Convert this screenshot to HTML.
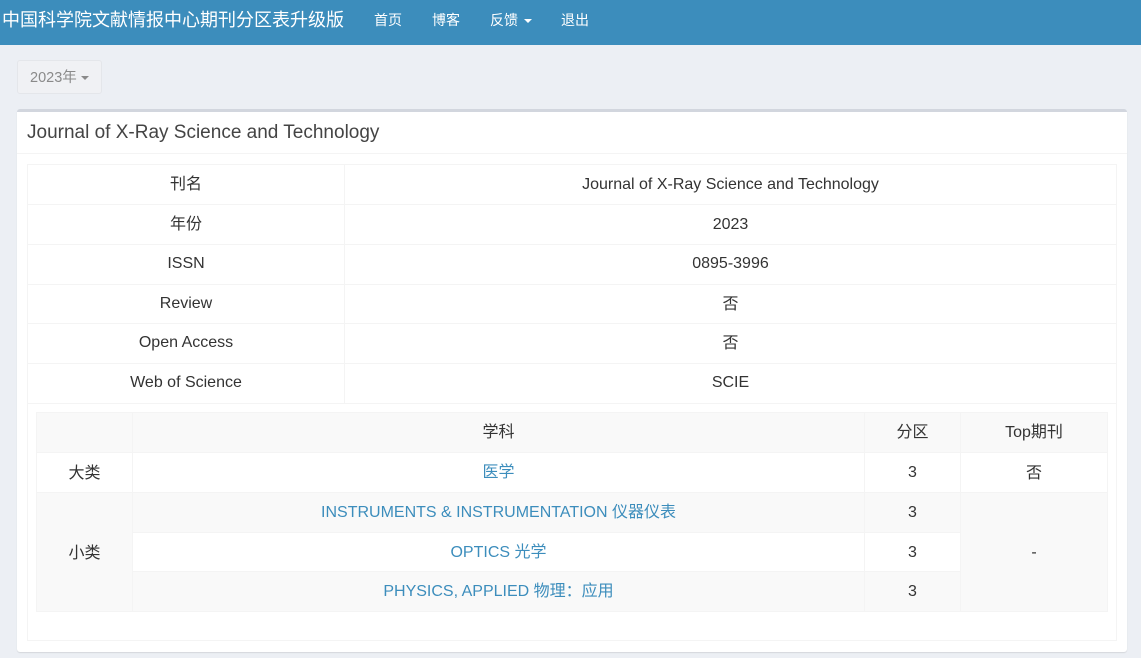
<!DOCTYPE html>
<html lang="zh-CN">
<head>
<meta charset="utf-8">
<title>Journal of X-Ray Science and Technology</title>
<style>
html,body{margin:0;padding:0;}
body{width:1141px;height:658px;overflow:hidden;position:relative;background:#eceff4;font-family:"Liberation Sans","Noto Sans CJK SC",sans-serif;font-size:16px;color:#333;}
.a{position:absolute;box-sizing:border-box;}
.c{position:absolute;box-sizing:border-box;text-align:center;white-space:nowrap;line-height:20px;}
.nav{left:0;top:0;width:1141px;height:45px;background:#3c8dbc;}
.w{color:#fff;white-space:nowrap;position:absolute;}
.hl{position:absolute;background:#f4f4f4;}
a{color:#3c8dbc;text-decoration:none;}
</style>
</head>
<body>
<div class="a nav"></div>
<div class="w" style="left:2px;top:8px;font-size:18px;line-height:24px;">中国科学院文献情报中心期刊分区表升级版</div>
<div class="w" style="left:374px;top:10px;font-size:14px;line-height:20px;">首页</div>
<div class="w" style="left:432px;top:10px;font-size:14px;line-height:20px;">博客</div>
<div class="w" style="left:490px;top:10px;font-size:14px;line-height:20px;">反馈</div>
<div class="a" style="left:524px;top:19px;width:0;height:0;border-left:4px solid transparent;border-right:4px solid transparent;border-top:4px solid #fff;"></div>
<div class="w" style="left:561px;top:10px;font-size:14px;line-height:20px;">退出</div>

<div class="a" style="left:17px;top:60px;width:85px;height:34px;background:#f0f1f4;border:1px solid #e4e6ea;border-radius:3px;"></div>
<div class="w" style="left:30px;top:68px;font-size:14.5px;line-height:20px;color:#8a8a8a;">2023年</div>
<div class="a" style="left:81px;top:76px;width:0;height:0;border-left:4px solid transparent;border-right:4px solid transparent;border-top:4px solid #8a8a8a;"></div>

<div class="a" style="left:17px;top:109px;width:1110px;height:543px;background:#fff;border-top:3px solid #d2d6de;border-radius:3px;box-shadow:0 1px 1px rgba(0,0,0,.1);"></div>
<div class="w" style="left:27px;top:121px;font-size:19px;line-height:24px;color:#444;">Journal of X-Ray Science and Technology</div>
<div class="hl" style="left:17px;top:153px;width:1110px;height:1px;"></div>

<!-- outer table lines -->
<div class="hl" style="left:27px;top:164px;width:1090px;height:1px;"></div>
<div class="hl" style="left:27px;top:204px;width:1090px;height:1px;"></div>
<div class="hl" style="left:27px;top:244px;width:1090px;height:1px;"></div>
<div class="hl" style="left:27px;top:284px;width:1090px;height:1px;"></div>
<div class="hl" style="left:27px;top:323px;width:1090px;height:1px;"></div>
<div class="hl" style="left:27px;top:363px;width:1090px;height:1px;"></div>
<div class="hl" style="left:27px;top:403px;width:1090px;height:1px;"></div>
<div class="hl" style="left:27px;top:640px;width:1090px;height:1px;"></div>
<div class="hl" style="left:27px;top:164px;width:1px;height:477px;"></div>
<div class="hl" style="left:1116px;top:164px;width:1px;height:477px;"></div>
<div class="hl" style="left:344px;top:164px;width:1px;height:240px;"></div>

<div class="c" style="left:28px;top:175px;width:316px;">刊名</div>
<div class="c" style="left:345px;top:175px;width:771px;">Journal of X-Ray Science and Technology</div>
<div class="c" style="left:28px;top:215px;width:316px;">年份</div>
<div class="c" style="left:345px;top:215px;width:771px;">2023</div>
<div class="c" style="left:28px;top:254px;width:316px;">ISSN</div>
<div class="c" style="left:345px;top:254px;width:771px;">0895-3996</div>
<div class="c" style="left:28px;top:294px;width:316px;">Review</div>
<div class="c" style="left:345px;top:295px;width:771px;">否</div>
<div class="c" style="left:28px;top:333px;width:316px;">Open Access</div>
<div class="c" style="left:345px;top:334px;width:771px;">否</div>
<div class="c" style="left:28px;top:373px;width:316px;">Web of Science</div>
<div class="c" style="left:345px;top:373px;width:771px;">SCIE</div>

<!-- inner table fills -->
<div class="a" style="left:36px;top:412px;width:1072px;height:40px;background:#f9f9f9;"></div>
<div class="a" style="left:36px;top:492px;width:1072px;height:120px;background:#f9f9f9;"></div>
<div class="a" style="left:133px;top:533px;width:827px;height:38px;background:#fff;"></div>
<!-- inner table lines -->
<div class="hl" style="left:36px;top:412px;width:1072px;height:1px;"></div>
<div class="hl" style="left:36px;top:452px;width:1072px;height:1px;"></div>
<div class="hl" style="left:36px;top:492px;width:1072px;height:1px;"></div>
<div class="hl" style="left:132px;top:532px;width:829px;height:1px;"></div>
<div class="hl" style="left:132px;top:571px;width:829px;height:1px;"></div>
<div class="hl" style="left:36px;top:611px;width:1072px;height:1px;"></div>
<div class="hl" style="left:36px;top:412px;width:1px;height:200px;"></div>
<div class="hl" style="left:132px;top:412px;width:1px;height:200px;"></div>
<div class="hl" style="left:864px;top:412px;width:1px;height:200px;"></div>
<div class="hl" style="left:960px;top:412px;width:1px;height:200px;"></div>
<div class="hl" style="left:1107px;top:412px;width:1px;height:200px;"></div>

<div class="c" style="left:133px;top:423px;width:731px;">学科</div>
<div class="c" style="left:865px;top:423px;width:95px;">分区</div>
<div class="c" style="left:961px;top:423px;width:146px;">Top期刊</div>
<div class="c" style="left:37px;top:464px;width:95px;">大类</div>
<div class="c" style="left:133px;top:463px;width:731px;"><a href="#">医学</a></div>
<div class="c" style="left:865px;top:463px;width:95px;">3</div>
<div class="c" style="left:961px;top:464px;width:146px;">否</div>
<div class="c" style="left:133px;top:503px;width:731px;"><a href="#">INSTRUMENTS &amp; INSTRUMENTATION 仪器仪表</a></div>
<div class="c" style="left:865px;top:503px;width:95px;">3</div>
<div class="c" style="left:37px;top:544px;width:95px;">小类</div>
<div class="c" style="left:133px;top:543px;width:731px;"><a href="#">OPTICS 光学</a></div>
<div class="c" style="left:865px;top:543px;width:95px;">3</div>
<div class="c" style="left:961px;top:543px;width:146px;">-</div>
<div class="c" style="left:133px;top:582px;width:731px;"><a href="#">PHYSICS, APPLIED 物理：应用</a></div>
<div class="c" style="left:865px;top:582px;width:95px;">3</div>
</body>
</html>
